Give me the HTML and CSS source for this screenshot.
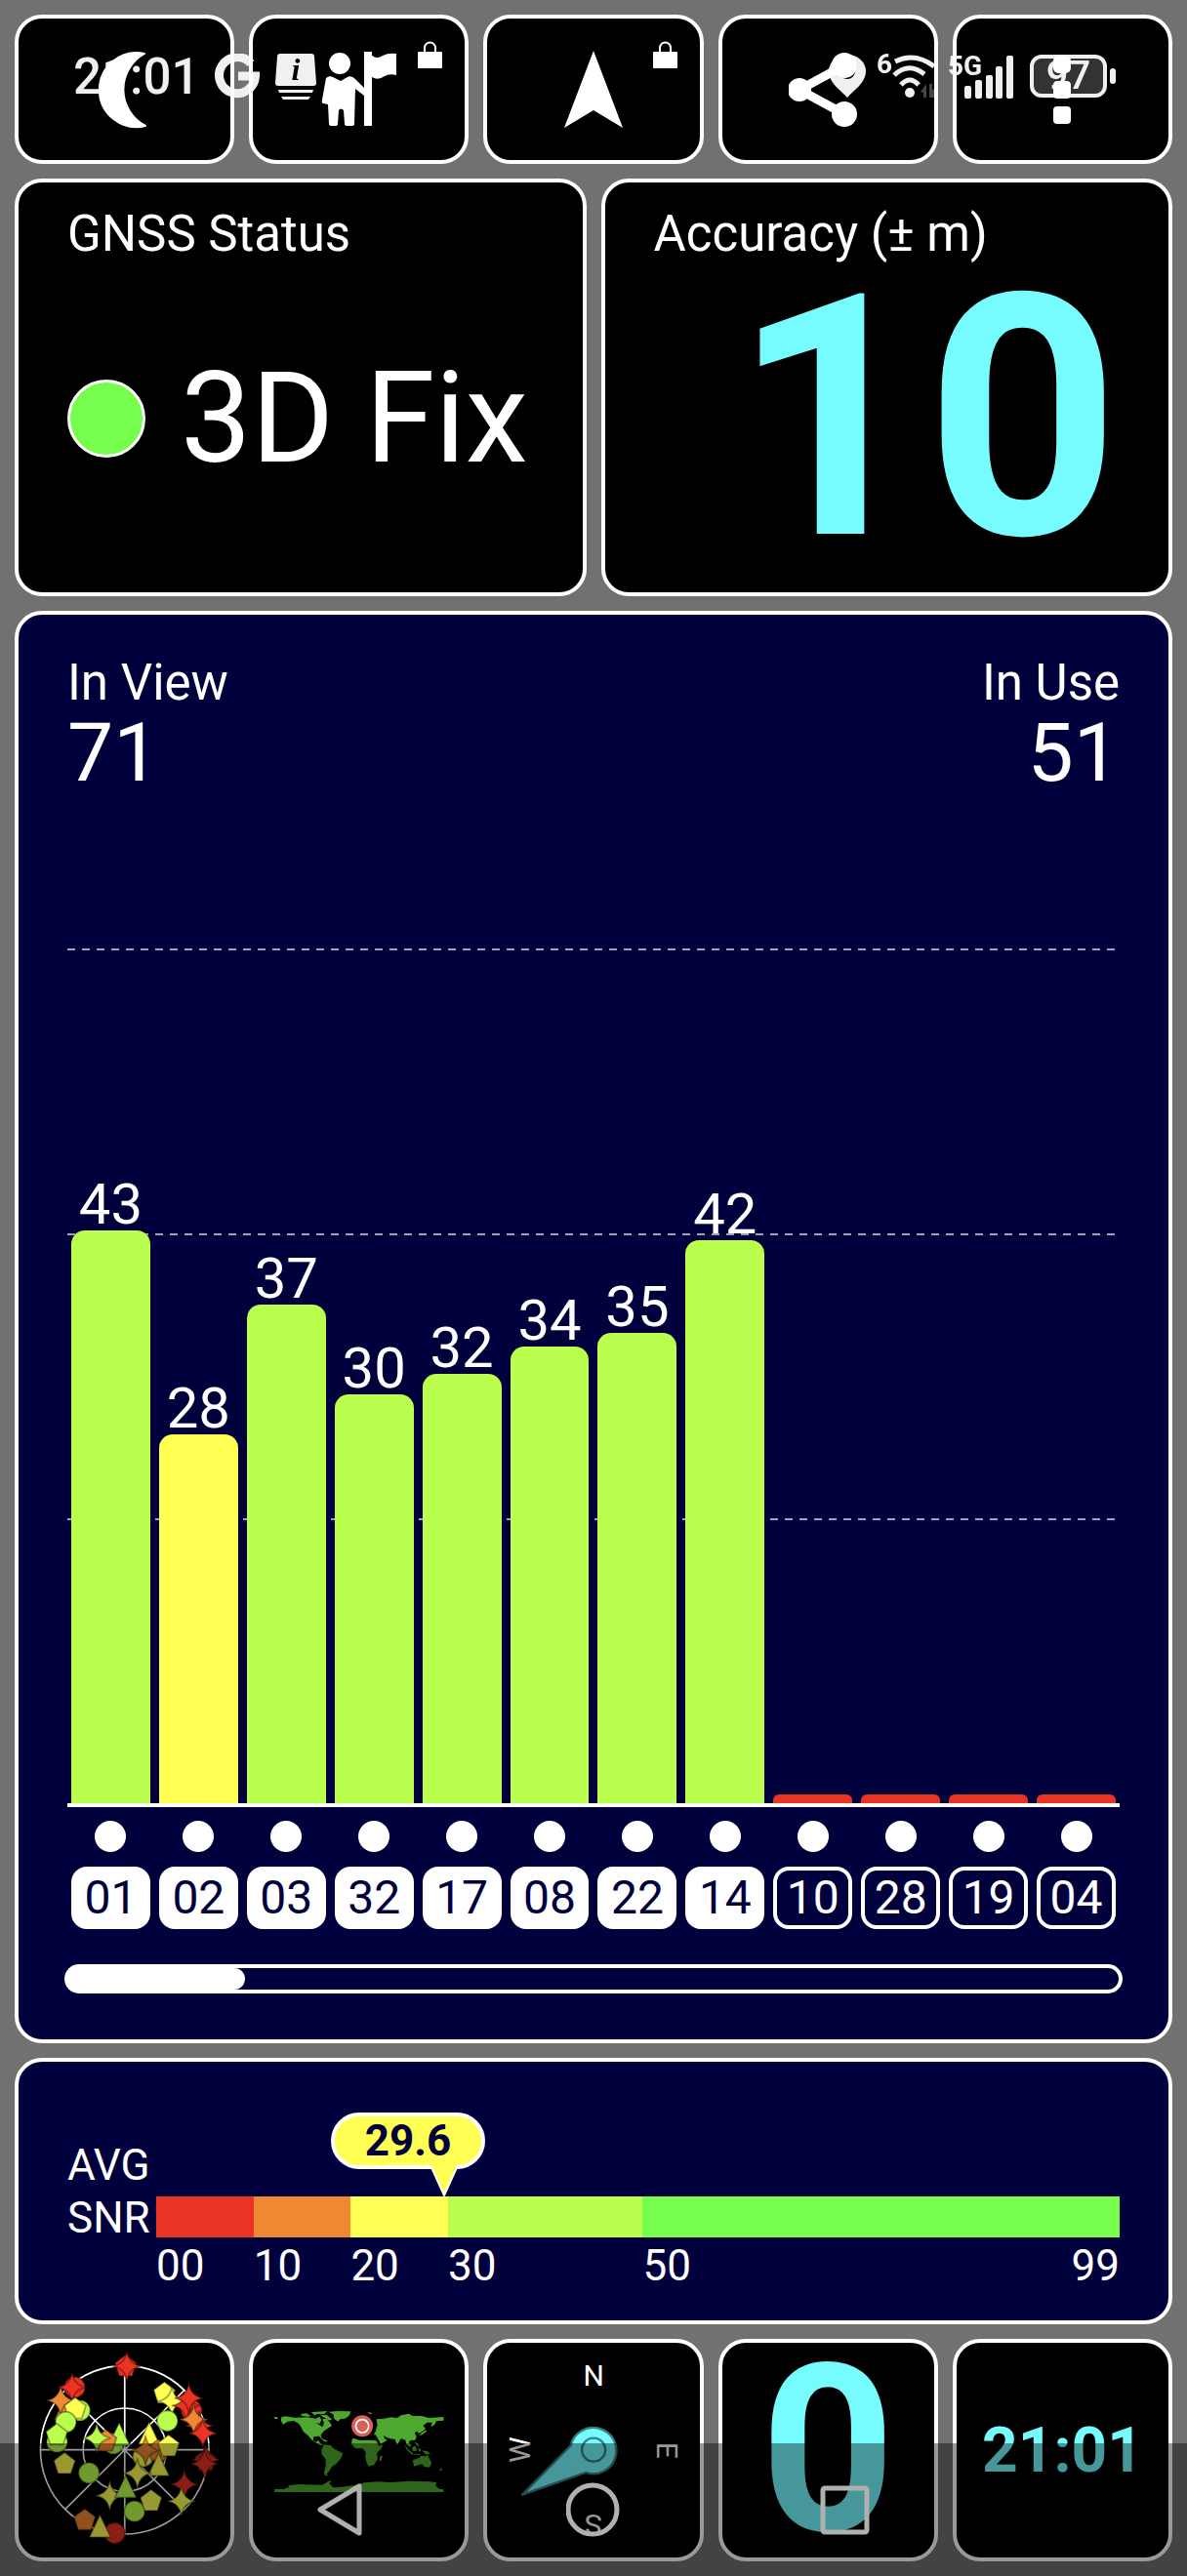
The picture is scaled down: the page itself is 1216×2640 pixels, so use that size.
FILE: index.html
```html
<!DOCTYPE html>
<html lang="en">
<head>
    <meta charset="UTF-8">
    <meta name="viewport" content="width=device-width, initial-scale=1.0">
    <title>GNSS Status</title>
    <link rel="stylesheet" href="styles.css">
</head>
<body>
    <!-- System status bar -->
    <div class="status-bar">
        <span class="clock">21:01</span>
        <svg class="ico-g" viewBox="0 0 46 46"><path d="M37 10A18.500 18.500 0 1 0 41.500 23H24" fill="none" stroke="#f0f0f0" stroke-width="9"/></svg>
        <svg class="ico-info" viewBox="0 0 42 48">
            <path d="M5 1H37Q40 1 40 4L42 31Q42 34 39 34H3Q0 34 0 31L2 4Q2 1 5 1ZM3 38H39L38 41H4ZM6 45H36L34 48H8Z" fill="#f0f0f0"/>
            <text x="21" y="28" text-anchor="middle">i</text>
        </svg>
        <span class="spacer"></span>
        <svg class="ico-pin" viewBox="0 0 38 44"><path fill-rule="evenodd" d="M19 44C13 37 0 29 0 17A19 17 0 0 1 38 17C38 29 25 37 19 44ZM19 9A8 8 0 1 0 19 25A8 8 0 1 0 19 9Z" fill="#f0f0f0"/></svg>
        <div class="wifi">
            <span class="net">6</span>
            <svg class="ico-wifi" viewBox="0 0 45 45">
                <g fill="none" stroke="#f0f0f0" stroke-width="5">
                    <path d="M3 7Q23 -3 43 12"/><path d="M2 21Q17 7 33 20"/><path d="M9 31Q18 21 27 31"/>
                </g>
                <circle cx="18" cy="39" r="5" fill="#f0f0f0"/>
                <path d="M29 38L35 30V44H32V39ZM38 30H41V37L45 31V44H38Z" fill="#444"/>
            </svg>
        </div>
        <div class="signal">
            <span class="net">5G</span>
            <svg class="ico-signal" viewBox="0 0 50 45">
                <g fill="#f0f0f0"><rect y="32" width="7" height="13" rx="2"/><rect x="11" y="26" width="7" height="19" rx="2"/><rect x="22" y="21" width="7" height="24" rx="2"/><rect x="32" y="12" width="7" height="33" rx="2"/><rect x="43" y="1" width="7" height="44" rx="2"/></g>
            </svg>
        </div>
        <div class="battery"><span>97</span></div>
    </div>

    <main class="dashboard">
        <!-- Toolbar -->
        <div class="row toolbar">
            <button class="card" aria-label="Night mode">
                <svg class="icon" viewBox="0 0 80 80"><path d="M60 3A38 38 0 1 0 61 77A42 42 0 0 1 60 3Z" fill="#fff" stroke="#fff" stroke-width="2" stroke-linejoin="round"/></svg>
            </button>
            <button class="card" aria-label="Waypoint">
                <svg class="icon" viewBox="0 0 80 80">
                    <g fill="#fff"><circle cx="20" cy="13" r="11"/>
                    <path d="M6 28Q9 25 13 27L21 31L28 27Q32 25 36 29L45 38V46L36 39L35 75Q35 77 32 77H28Q25 77 25 75L24 61Q21 58 19 61L18 75Q18 77 15 77H11Q9 77 9 75L8 55L3 54Q1 53 2 50Z"/>
                    <path d="M45 1H53V5Q59 9 64 5Q70 2 78 3V25Q71 23 66 26Q59 31 53 27V77H45Z"/></g>
                </svg>
                <svg class="lock" viewBox="0 0 25 28"><rect y="11" width="25" height="17" rx="1" fill="#fff"/><path d="M7 12V7A5.500 5.500 0 0 1 18 7V12" fill="none" stroke="#fff" stroke-width="2"/></svg>
            </button>
            <button class="card" aria-label="Navigate">
                <svg class="icon" viewBox="0 0 80 80"><path d="M40 0L70 79L40 61L10 79Z" fill="#fff"/></svg>
                <svg class="lock" viewBox="0 0 25 28"><rect y="11" width="25" height="17" rx="1" fill="#fff"/><path d="M7 12V7A5.500 5.500 0 0 1 18 7V12" fill="none" stroke="#fff" stroke-width="2"/></svg>
            </button>
            <button class="card" aria-label="Share">
                <svg class="icon" viewBox="0 0 80 80"><path d="M57 15L11 40L57 65" fill="none" stroke="#fff" stroke-width="9"/><g fill="#fff"><circle cx="11" cy="40" r="12"/><circle cx="57" cy="15" r="13"/><circle cx="57" cy="65" r="13"/></g></svg>
            </button>
            <button class="card" aria-label="Menu">
                <svg class="icon" viewBox="0 0 80 80"><g fill="#fff"><rect x="31" y="5" width="18" height="18" rx="5"/><rect x="31" y="31" width="18" height="18" rx="4"/><rect x="31" y="57" width="18" height="18" rx="4"/></g></svg>
            </button>
        </div>

        <!-- Fix and accuracy -->
        <div class="row summary">
            <section class="card panel">
                <h2 class="title">GNSS Status</h2>
                <div class="fix"><span class="led"></span>3D Fix</div>
            </section>
            <section class="card panel">
                <h2 class="title">Accuracy (± m)</h2>
                <div class="accuracy">10</div>
            </section>
        </div>

        <!-- Signal chart -->
        <section class="card chart">
            <div class="counts">
                <div>
                    <h2 class="title">In View</h2>
                    <div class="count">71</div>
                </div>
                <div class="in-use">
                    <h2 class="title">In Use</h2>
                    <div class="count">51</div>
                </div>
            </div>
            <div class="plot">
                <div class="grid-lines"><i></i><i></i><i></i></div>
                <div class="bars">
                    <div class="col"><span>43</span><div class="bar lime" style="height: 67%"></div></div>
                    <div class="col"><span>28</span><div class="bar yellow" style="height: 43.2%"></div></div>
                    <div class="col"><span>37</span><div class="bar lime" style="height: 58.3%"></div></div>
                    <div class="col"><span>30</span><div class="bar lime" style="height: 47.8%"></div></div>
                    <div class="col"><span>32</span><div class="bar lime" style="height: 50.2%"></div></div>
                    <div class="col"><span>34</span><div class="bar lime" style="height: 53.4%"></div></div>
                    <div class="col"><span>35</span><div class="bar lime" style="height: 55%"></div></div>
                    <div class="col"><span>42</span><div class="bar lime" style="height: 65.9%"></div></div>
                    <div class="col"><div class="bar red" style="height: 1%"></div></div>
                    <div class="col"><div class="bar red" style="height: 1%"></div></div>
                    <div class="col"><div class="bar red" style="height: 1%"></div></div>
                    <div class="col"><div class="bar red" style="height: 1%"></div></div>
                </div>
            </div>
            <div class="sats">
                <div class="sat used">01</div>
                <div class="sat used">02</div>
                <div class="sat used">03</div>
                <div class="sat used">32</div>
                <div class="sat used">17</div>
                <div class="sat used">08</div>
                <div class="sat used">22</div>
                <div class="sat used">14</div>
                <div class="sat">10</div>
                <div class="sat">28</div>
                <div class="sat">19</div>
                <div class="sat">04</div>
            </div>
            <div class="scroll"><div class="thumb" style="width: 16.8%"></div></div>
        </section>

        <!-- Average SNR -->
        <section class="card snr">
            <div class="snr-label">AVG<br>SNR</div>
            <div class="scale">
                <div class="bands">
                    <div class="red"></div>
                    <div class="orange"></div>
                    <div class="yellow"></div>
                    <div class="lime"></div>
                    <div class="green"></div>
                </div>
                <div class="ticks">
                    <span>00</span>
                    <span>10</span>
                    <span>20</span>
                    <span>30</span>
                    <span class="last"><span>50</span><span>99</span></span>
                </div>
                <div class="marker" style="left: 29.9%">
                    <div class="bubble">29.6</div>
                    <svg class="tip" viewBox="0 0 28 33"><path d="M0 0L14 31L28 0" fill="#ffff54" stroke="#fff" stroke-width="2"/></svg>
                </div>
            </div>
        </section>

        <!-- Page tiles -->
        <div class="row tiles">
            <button class="card" aria-label="Sky view">
                <svg class="tile-art" viewBox="57 63 651 660">
                    <defs>
                        <path id="star" d="M0 -46Q6 -6 44 0Q6 6 0 46Q-6 6 -44 0Q-6 -6 0 -46Z"/>
                        <path id="pent" d="M0 -34L33 -9L20 31H-20L-33 -9Z"/>
                        <path id="tri" d="M0 -38L33 31H-33Z"/>
                        <circle id="dot" r="32"/>
                    </defs>
                    <g fill="none" stroke="#fff" stroke-width="5">
                        <circle cx="383" cy="392" r="259"/><circle cx="383" cy="392" r="128"/>
                        <path d="M383 135V650M124 392H642M200 575L565 210M200 210L565 575"/>
                    </g>
                    <g class="marks">
                        <use href="#pent" x="386" y="134" class="f-red"/><use href="#star" x="390" y="135" class="f-red"/>
                        <use href="#dot" x="229" y="200" class="f-red"/><use href="#star" x="221" y="200" class="f-red"/>
                        <use href="#tri" x="200" y="268" class="f-orange"/><use href="#star" x="186" y="240" class="f-orange"/>
                        <use href="#dot" x="245" y="271" class="f-lime"/><use href="#pent" x="231" y="265" class="f-yellow"/>
                        <use href="#dot" x="202" y="307" class="f-lime"/><use href="#dot" x="175" y="368" class="f-lime"/>
                        <use href="#pent" x="174" y="345" class="f-lime"/>
                        <use href="#pent" x="505" y="217" class="f-yellow"/><use href="#star" x="528" y="243" class="f-yellow"/>
                        <use href="#dot" x="514" y="303" class="f-lime"/>
                        <use href="#dot" x="588" y="270" class="f-red"/><use href="#star" x="572" y="256" class="f-red"/>
                        <use href="#star" x="580" y="233" class="f-red"/><use href="#star" x="612" y="318" class="f-red"/>
                        <use href="#star" x="595" y="299" class="f-orange"/><use href="#star" x="623" y="341" class="f-red"/>
                        <use href="#dot" x="348" y="373" class="f-lime"/><use href="#tri" x="366" y="347" class="f-lime"/>
                        <use href="#pent" x="325" y="364" class="f-orange"/><use href="#star" x="297" y="356" class="f-lime"/>
                        <use href="#tri" x="458" y="345" class="f-yellow"/><use href="#dot" x="440" y="412" class="f-yellow"/>
                        <use href="#pent" x="486" y="394" class="f-orange"/><use href="#pent" x="518" y="380" class="f-yellow"/>
                        <use href="#star" x="447" y="394" class="f-orange"/><use href="#tri" x="487" y="441" class="f-yellow"/>
                        <use href="#star" x="422" y="464" class="f-yellow"/>
                        <use href="#pent" x="198" y="434" class="f-yellow"/><use href="#dot" x="273" y="463" class="f-lime"/>
                        <use href="#pent" x="631" y="424" class="f-red"/><use href="#star" x="632" y="422" class="f-red"/><use href="#star" x="628" y="435" class="f-red"/>
                        <use href="#star" x="566" y="498" class="f-red"/><use href="#star" x="557" y="550" class="f-yellow"/>
                        <use href="#star" x="337" y="533" class="f-yellow"/><use href="#tri" x="386" y="508" class="f-lime"/>
                        <use href="#dot" x="413" y="581" class="f-lime"/><use href="#pent" x="464" y="548" class="f-yellow"/>
                        <use href="#pent" x="260" y="607" class="f-orange"/><use href="#dot" x="352" y="648" class="f-red"/>
                        <use href="#tri" x="307" y="630" class="f-yellow"/>
                    </g>
                </svg>
            </button>
            <button class="card" aria-label="World map">
                <svg class="tile-art" viewBox="57 63 651 660">
                    <g fill="#4ea72e">
                        <path d="M122 290L134 292L132 298L123 296ZM145 291L158 289L185 293L225 292L250 296L262 290L268 300L262 312L250 309L262 316L272 322L275 308L270 298L284 296L292 306L300 318L285 328L276 334L266 346L268 358L260 350L244 352L242 364L252 368L258 362L262 370L275 378L264 378L240 364L226 348L212 336L204 320L196 310L182 303L164 305L150 314L143 302Z"/>
                        <path d="M204 282L222 280L236 288L226 290L208 288ZM236 276L286 273L276 282L252 282L248 287ZM290 275L318 273L358 274L352 288L340 296L325 298L318 305L306 296L305 284ZM262 284L284 285L300 298L292 302L274 292ZM262 354L276 360L288 366L278 367ZM408 277L424 278L418 284Z"/>
                        <path d="M276 376L295 378L308 390L333 402L328 418L314 434L300 444L290 460L284 466L287 472L278 470L275 464L281 440L280 420L268 406L268 390Z"/>
                        <path d="M362 358L385 356L395 362L414 362L436 364L444 380L456 376L452 388L438 402L440 420L430 438L412 443L406 430L402 412L404 400L394 388L372 388L360 374ZM448 412L456 410L450 428L446 426Z"/>
                        <path d="M436 298L460 296L482 292L500 294L512 286L536 281L548 288L576 288L598 294L643 291V302L620 304L616 314L604 322L608 308L592 308L580 318L588 328L574 338L566 342L562 335L554 340L560 352L556 362L540 364L536 370L545 378L538 384L528 374L526 362L512 358L500 378L494 360L480 358L468 354L458 348L462 358L470 362L450 374L440 356L434 346L400 344L420 330L440 318ZM586 332L592 334L578 346L566 347Z"/>
                        <path d="M548 424L568 416L574 410L588 412L594 408L606 432L600 446L584 444L576 436L552 443ZM522 376L536 392L550 404L572 406L570 409L544 406L530 392ZM546 384L558 380L560 396L548 396ZM562 388L574 390L570 400ZM576 394L592 396L604 406L588 406ZM556 368L566 374L566 384L558 376ZM628 456L640 446L636 456Z"/>
                        <path d="M123 513H158L155 509L170 508L164 502L196 498L270 500L290 488L299 486L292 496L304 508L330 506L375 500L400 493L440 490L480 492L540 488L600 490L622 493L618 502L630 512L643 514V522H123Z"/>
                    </g>
                    <circle cx="393" cy="319" r="44"/>
                    <circle cx="393" cy="319" r="33" fill="#d85f5a"/>
                    <circle cx="393" cy="319" r="20" fill="none" stroke="#fff" stroke-width="5"/>
                </svg>
            </button>
            <button class="card" aria-label="Compass">
                <svg class="tile-art compass" viewBox="57 63 651 660">
                    <text x="384" y="194">N</text>
                    <text transform="translate(189 392) rotate(-90)">W</text>
                    <text transform="translate(580 394) rotate(90)">E</text>
                    <text transform="translate(384 592) rotate(180)">S</text>
                    <path d="M314 378A71 71 0 1 1 360 462L165 530Z" fill="#76fcff" stroke="#3a7f81" stroke-width="7" stroke-linejoin="round"/>
                    <circle cx="384" cy="392" r="36" fill="none" stroke="#3a7f81" stroke-width="7"/>
                </svg>
            </button>
            <button class="card big">0</button>
            <button class="card time">21:01</button>
        </div>
    </main>

    <!-- System navigation -->
    <nav class="nav-bar">
        <button aria-label="Back"><svg viewBox="0 0 56 56"><path d="M46 4V52L6 28Z"/></svg></button>
        <button aria-label="Home"><svg viewBox="0 0 56 56"><circle cx="27" cy="28" r="25"/></svg></button>
        <button aria-label="Recents"><svg viewBox="0 0 56 56"><rect x="5" y="6" width="45" height="45" rx="2"/></svg></button>
    </nav>
</body>
</html>
```
FILE: styles.css
```css
* {
    box-sizing: border-box;
}

body {
    margin: 0;
    background-color: #717171;
    color: #fff;
    font-family: Roboto, "Liberation Sans", sans-serif;
}

button {
    font-family: inherit;
    color: inherit;
    cursor: pointer;
}

h2 {
    margin: 0;
}

svg {
    display: block;
}

.dashboard {
    display: flex;
    flex-direction: column;
    gap: 15px;
    min-height: 100vh;
    padding: 15px;
}

.row {
    display: grid;
    gap: 15px;
}

.card {
    position: relative;
    padding: 0;
    border: 4px solid #fff;
    border-radius: 28px;
    background-color: #000;
}

/* Toolbar */
.toolbar {
    grid-template-columns: repeat(5, 1fr);
}

.toolbar .card {
    display: flex;
    align-items: center;
    justify-content: center;
    min-height: 153px;
}

.icon {
    width: 80px;
    height: 80px;
}

.lock {
    position: absolute;
    top: 23px;
    right: 23px;
    width: 25px;
    height: 28px;
}

/* Fix and accuracy */
.summary {
    grid-template-columns: 1fr 1fr;
}

.panel {
    display: flex;
    flex-direction: column;
    min-height: 428px;
    padding: 25px 50px 18px;
}

.title {
    font-size: 51px;
    line-height: 56px;
    font-weight: 400;
}

.fix {
    display: flex;
    flex: 1;
    align-items: center;
    gap: 36px;
    font-size: 129px;
    line-height: 140px;
    white-space: nowrap;
}

.led {
    width: 80px;
    height: 80px;
    border: 3px solid #fff;
    border-radius: 50%;
    background-color: #77fe4c;
}

.accuracy {
    display: flex;
    flex: 1;
    align-items: center;
    justify-content: flex-end;
    color: #76fcff;
    font-size: 346px;
    line-height: 300px;
    font-weight: 700;
}

/* Signal chart */
.chart {
    display: flex;
    flex: 1;
    flex-direction: column;
    padding: 42px 50px 47px;
    background-color: #00003c;
}

.counts {
    display: flex;
    justify-content: space-between;
}

.in-use {
    text-align: right;
}

.count {
    font-size: 84px;
    line-height: 88px;
}

.plot {
    position: relative;
    flex: 1;
    min-height: 600px;
    margin-top: 156px;
    border-bottom: 4px solid #fff;
}

.grid-lines {
    position: absolute;
    inset: 0;
    display: grid;
    grid-template-rows: repeat(3, 1fr);
}

.grid-lines i {
    background: repeating-linear-gradient(90deg, #a0a0b8 0 8px, transparent 8px 15px) top / 100% 2px no-repeat;
}

.bars {
    position: absolute;
    inset: 0;
    display: grid;
    grid-template-columns: repeat(12, 1fr);
    gap: 9px;
    padding: 0 4px;
}

.col {
    display: flex;
    flex-direction: column;
    justify-content: flex-end;
    text-align: center;
    font-size: 58px;
    line-height: 54px;
}

.bar {
    flex-shrink: 0;
    border-radius: 14px 14px 0 0;
}

.red { background-color: #ea3323; }
.orange { background-color: #ef8833; }
.yellow { background-color: #ffff54; }
.lime { background-color: #bbff4e; }
.green { background-color: #77fe4c; }

.bar.red {
    border-radius: 6px 6px 0 0;
}

.sats {
    display: grid;
    grid-template-columns: repeat(12, 1fr);
    gap: 9px;
    padding: 61px 4px 36px;
}

.sat {
    position: relative;
    border: 4px solid #fff;
    border-radius: 16px;
    text-align: center;
    font-size: 48px;
    line-height: 56px;
}

.sat::before {
    content: "";
    position: absolute;
    top: -51px;
    left: calc(50% - 16px);
    width: 32px;
    height: 32px;
    border-radius: 50%;
    background-color: #fff;
}

.sat.used {
    background-color: #fff;
    color: #00003c;
}

.scroll {
    height: 30px;
    margin: 0 -3px;
    border: 4px solid #fff;
    border-radius: 15px;
}

.thumb {
    height: 22px;
    border-radius: 0 11px 11px 0;
    background-color: #fff;
}

/* Average SNR */
.snr {
    display: flex;
    min-height: 273px;
    padding: 79px 50px 0;
    background-color: #00003c;
    font-size: 44px;
}

.snr-label {
    width: 91px;
    line-height: 54px;
}

.scale {
    position: relative;
    flex: 1;
    padding-top: 59px;
}

.bands,
.ticks {
    display: grid;
    grid-template-columns: 10fr 10fr 10fr 20fr 49fr;
}

.bands {
    height: 42px;
}

.ticks {
    margin-top: 5px;
    line-height: 48px;
}

.last {
    display: flex;
    justify-content: space-between;
}

.marker {
    position: absolute;
    top: -27px;
}

.bubble {
    width: 158px;
    margin-left: -116px;
    border: 4px solid #fff;
    border-radius: 29px;
    background-color: #ffff54;
    color: #00003c;
    text-align: center;
    line-height: 50px;
    font-weight: 700;
}

.tip {
    position: absolute;
    top: 54px;
    left: -14px;
    width: 28px;
    height: 33px;
}

/* Page tiles */
.tiles {
    grid-template-columns: repeat(5, 1fr);
}

.tiles .card {
    min-height: 228px;
}

.tile-art {
    width: 100%;
    height: 220px;
}

.marks {
    stroke: rgba(0, 0, 0, 0.35);
    stroke-width: 5px;
}

.f-red { fill: #ea3323; }
.f-orange { fill: #ef8833; }
.f-yellow { fill: #ffff54; }
.f-lime { fill: #bbff4e; }

.compass text {
    fill: #fff;
    font-size: 90px;
    font-weight: 400;
    text-anchor: middle;
}

.big,
.time {
    color: #76fcff;
    font-weight: 700;
}

.big {
    font-size: 240px;
    line-height: 220px;
}

.time {
    font-size: 64px;
}

/* System bars */
.status-bar {
    position: absolute;
    top: 0;
    left: 0;
    right: 0;
    z-index: 1;
    display: flex;
    align-items: center;
    height: 156px;
    padding: 0 73px 0 75px;
    color: #f0f0f0;
    mix-blend-mode: lighten;
    pointer-events: none;
}

.clock {
    width: 145px;
    font-size: 51px;
    font-weight: 500;
}

.spacer {
    flex: 1;
}

.ico-g {
    width: 46px;
    height: 46px;
    margin-right: 16px;
}

.ico-info {
    width: 42px;
    height: 48px;
    overflow: visible;
}

.ico-info text {
    fill: #000;
    font: italic 700 32px "Liberation Serif", serif;
}

.ico-pin {
    width: 38px;
    height: 44px;
    margin-right: 11px;
}

.wifi {
    display: flex;
    margin-right: 14px;
}

.net {
    font-size: 28px;
    line-height: 20px;
    font-weight: 700;
}

.ico-wifi {
    width: 45px;
    height: 45px;
}

.signal {
    position: relative;
    padding-left: 15px;
    margin-right: 17px;
}

.signal .net {
    position: absolute;
    top: 2px;
    left: -2px;
}

.ico-signal {
    width: 50px;
    height: 45px;
}

.battery {
    position: relative;
    width: 79px;
    height: 44px;
    margin-right: 9px;
    border: 4px solid #f0f0f0;
    border-radius: 12px;
    background-color: #333;
    text-align: center;
    font-size: 40px;
    line-height: 36px;
    font-weight: 500;
}

.battery::after {
    content: "";
    position: absolute;
    top: 10px;
    right: -13px;
    width: 6px;
    height: 16px;
    border-radius: 3px;
    background-color: #f0f0f0;
}

.nav-bar {
    position: fixed;
    left: 0;
    right: 0;
    bottom: 0;
    display: flex;
    align-items: center;
    justify-content: center;
    gap: 202px;
    height: 136px;
    background-color: rgba(0, 0, 0, 0.4);
}

.nav-bar button {
    padding: 0;
    border: 0;
    background: none;
}

.nav-bar svg {
    width: 56px;
    height: 56px;
    fill: none;
    stroke: #b0b0b0;
    stroke-width: 5px;
    stroke-linejoin: round;
}
```
